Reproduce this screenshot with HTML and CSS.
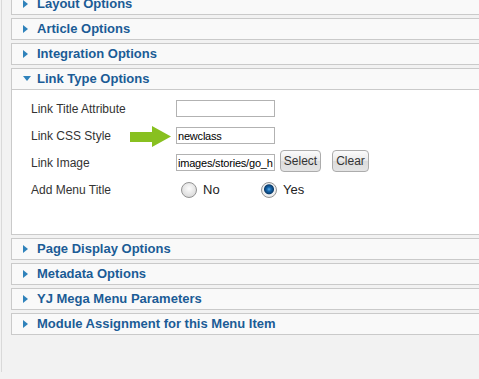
FILE: index.html
```html
<!DOCTYPE html>
<html lang="en">
<head>
    <meta charset="UTF-8">
    <title>Menu Item Parameters</title>
    <link rel="stylesheet" href="styles.css">
</head>
<body>
    <div class="page">
        <div class="sliders">
            <div class="pane"><h3 class="toggler"><span class="slot"><span class="arrow"></span></span>Layout Options</h3></div>
            <div class="pane"><h3 class="toggler"><span class="slot"><span class="arrow"></span></span>Article Options</h3></div>
            <div class="pane"><h3 class="toggler"><span class="slot"><span class="arrow"></span></span>Integration Options</h3></div>
            <div class="pane open">
                <h3 class="toggler"><span class="slot"><span class="arrow down"></span></span>Link Type Options</h3>
                <div class="content">
                    <div class="row">
                        <label class="key">Link Title Attribute</label>
                        <input type="text" class="text" value="">
                    </div>
                    <div class="row">
                        <label class="key">Link CSS Style</label>
                        <svg class="pointer" width="42" height="22" viewBox="0 0 42 22">
                            <polygon points="0,6 22,6 22,0 41,10.5 22,21 22,16 0,16" fill="#88c020"/>
                        </svg>
                        <input type="text" class="text" value="newclass">
                    </div>
                    <div class="row">
                        <label class="key">Link Image</label>
                        <input type="text" class="text" value="images/stories/go_home.png">
                        <button class="btn btn-select">Select</button>
                        <button class="btn btn-clear">Clear</button>
                    </div>
                    <div class="row">
                        <label class="key">Add Menu Title</label>
                        <label class="option"><input type="radio" name="menu_title" class="radio">No</label>
                        <label class="option"><input type="radio" name="menu_title" class="radio" checked>Yes</label>
                    </div>
                </div>
            </div>
            <div class="pane"><h3 class="toggler"><span class="slot"><span class="arrow"></span></span>Page Display Options</h3></div>
            <div class="pane"><h3 class="toggler"><span class="slot"><span class="arrow"></span></span>Metadata Options</h3></div>
            <div class="pane"><h3 class="toggler"><span class="slot"><span class="arrow"></span></span>YJ Mega Menu Parameters</h3></div>
            <div class="pane"><h3 class="toggler"><span class="slot"><span class="arrow"></span></span>Module Assignment for this Menu Item</h3></div>
        </div>
    </div>
</body>
</html>
```

FILE: styles.css
```css
html, body {
    margin: 0;
    padding: 0;
    height: 100%;
    overflow: hidden;
}
body {
    background-color: #f2f2f2;
    font-family: "Liberation Sans", Arial, sans-serif;
}
.page {
    margin-left: 1px;
    border-left: 1px solid #d9d9d9;
    padding-left: 9px;
    height: 100%;
}
.sliders {
    margin-top: -7px;
    margin-right: -30px;
}
.pane {
    border: 1px solid #cacaca;
    background-color: #f9f9f9;
    margin-bottom: 3px;
}
.toggler {
    margin: 0;
    height: 20px;
    line-height: 20px;
    padding-left: 11px;
    display: flex;
    align-items: center;
    font-size: 13px;
    font-weight: bold;
    color: #1b5c96;
    white-space: nowrap;
}
.slot {
    width: 14px;
    display: flex;
    align-items: center;
    margin-top: -1px;
}
.arrow {
    width: 0;
    height: 0;
    border-left: 5px solid #2f82bb;
    border-top: 4px solid transparent;
    border-bottom: 4px solid transparent;
}
.arrow.down {
    border-left: 4px solid transparent;
    border-right: 4px solid transparent;
    border-top: 5px solid #2f82bb;
    border-bottom: none;
}
.open .toggler {
    border-bottom: 1px solid #cacaca;
}
.content {
    background-color: #fff;
    height: 144px;
    box-sizing: border-box;
    padding-top: 5px;
    padding-left: 19px;
}
.row {
    position: relative;
    display: flex;
    align-items: center;
    height: 27px;
}
.key {
    width: 145px;
    flex-shrink: 0;
    font-size: 12px;
    color: #333;
}
.text {
    width: 99px;
    height: 17px;
    box-sizing: border-box;
    margin: 0;
    padding: 0 1px;
    border: 1px solid #b2b2b2;
    background-color: #fff;
    font-family: "Liberation Sans", Arial, sans-serif;
    font-size: 11px;
    letter-spacing: -0.2px;
    color: #000;
    outline: none;
}
.pointer {
    position: absolute;
    left: 99px;
    top: 4px;
}
.btn {
    height: 22px;
    box-sizing: border-box;
    margin: 0 0 4px 5px;
    padding: 0;
    border: 1px solid #acacac;
    border-radius: 4px;
    background: linear-gradient(#fbfbfb, #e9e9e9 50%, #dcdcdc 51%, #e4e4e4);
    font-family: "Liberation Sans", Arial, sans-serif;
    font-size: 12px;
    color: #333;
}
.btn-select {
    width: 41px;
}
.btn-clear {
    width: 37px;
    margin-left: 11px;
}
.option {
    width: 80px;
    display: flex;
    align-items: center;
    font-size: 13px;
    color: #222;
}
.radio {
    appearance: none;
    -webkit-appearance: none;
    width: 16px;
    height: 16px;
    margin: 0 6px 0 5px;
    border: 1px solid #939393;
    border-radius: 50%;
    background: radial-gradient(circle at 50% 40%, #fdfdfd, #e2e2e2 60%, #cfcfcf);
}
.radio:checked {
    background: radial-gradient(circle at 50% 45%, #5fb0ea 0, #1769b0 2px, #0b3d6d 4.5px, #f2f2f2 5.5px, #d9d9d9 100%);
}
```
